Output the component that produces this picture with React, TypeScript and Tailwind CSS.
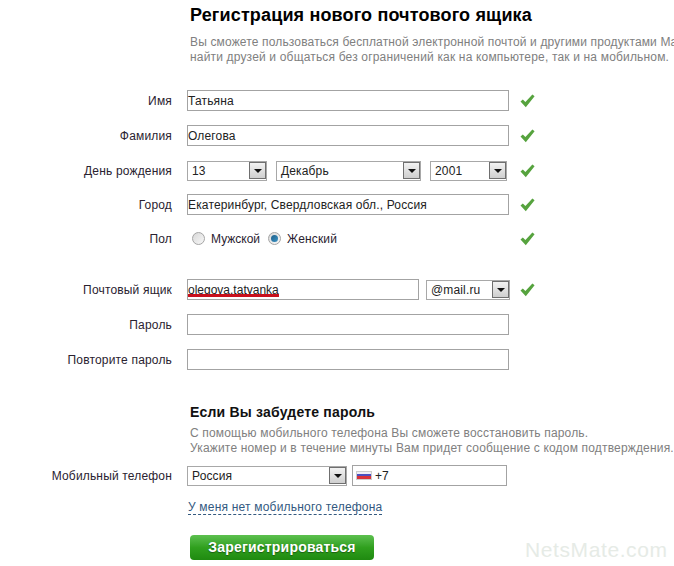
const font = 'font-["Liberation_Sans",Arial,sans-serif]'

function Check() {
    return (
        <svg width="15" height="14" viewBox="0 0 15 14" className="shrink-0">
            <path d="M0.5 7.6 L2.8 5.4 L5.4 8 L12.4 0.6 L14.6 2.2 L5.8 13.2 Z" fill="#56a33e" />
        </svg>
    )
}

function Arrow() {
    return (
        <div className="w-[17px] h-[17px] shrink-0 border border-[#6f6f6f] bg-gradient-to-b from-[#f2f2f2] to-[#cfcfcf] flex items-center justify-center">
            <div className="w-0 h-0 border-x-[4px] border-x-transparent border-t-[4px] border-t-[#111]" />
        </div>
    )
}

function Select({ value, className }: { value: string; className: string }) {
    return (
        <div className={`h-[20px] border border-[#a8a8a8] flex items-center justify-between pl-[4px] pr-[0px] text-[12px] tracking-[0.15px] text-[#222] ${className}`}>
            <span>{value}</span>
            <Arrow />
        </div>
    )
}

function Input({ value, className = 'w-[322px] tracking-[0.15px]' }: { value?: string; className?: string }) {
    return (
        <div className={`h-[21px] border border-[#a3a3a3] flex items-center pl-[0px] text-[12px] text-[#222] ${className}`}>
            {value}
        </div>
    )
}

function Row({ label, check, className = '', children }: { label: string; check?: boolean; className?: string; children: React.ReactNode }) {
    return (
        <div className={`flex items-center h-[21px] ${className}`}>
            <div className="w-[172px] text-right text-[12px] tracking-[0.17px] text-[#2a2230] shrink-0">{label}</div>
            <div className="ml-[15px] w-[322px] shrink-0 flex items-center justify-between">{children}</div>
            {check && <div className="ml-[11px]"><Check /></div>}
        </div>
    )
}

function Radio({ on }: { on?: boolean }) {
    return (
        <div className="w-[13px] h-[13px] rounded-full border border-[#a5a5a5] bg-gradient-to-br from-[#d8d8d8] to-[#f8f8f8] flex items-center justify-center shrink-0">
            {on && <div className="w-[7px] h-[7px] rounded-full bg-gradient-to-br from-[#1d5f8a] to-[#3c93c4]" />}
        </div>
    )
}

export default function App() {
    return (
        <div className={`relative w-[674px] h-[566px] overflow-hidden bg-white ${font}`}>
            <div className="pl-[190px] pt-[4px] whitespace-nowrap">
                <h1 className="text-[18px] leading-[22px] font-bold text-black tracking-[0.15px]">Регистрация нового почтового ящика</h1>
                <p className="mt-[9px] text-[12px] leading-[15px] tracking-[0.15px] text-[#808080]">
                    Вы сможете пользоваться бесплатной электронной почтой и другими продуктами Ma
                    <br />
                    <span className="tracking-[0.17px]">найти друзей и общаться без ограничений как на компьютере, так и на мобильном.</span>
                </p>
            </div>

            <div className="mt-[25px] flex flex-col">
                <Row label="Имя" check><Input value="Татьяна" /></Row>
                <Row label="Фамилия" check className="mt-[14px]"><Input value="Олегова" /></Row>
                <Row label="День рождения" check className="mt-[14px]">
                    <Select value="13" className="w-[80px]" />
                    <Select value="Декабрь" className="w-[145px]" />
                    <Select value="2001" className="w-[77px] mr-[2px]" />
                </Row>
                <Row label="Город" check className="mt-[13px]"><Input value="Екатеринбург, Свердловская обл., Россия" /></Row>
                <Row label="Пол" check className="mt-[13px]">
                    <div className="flex items-center text-[12px] text-[#2a2230] pl-[5px]">
                        <Radio />
                        <span className="ml-[6px]">Мужской</span>
                        <div className="ml-[8px]"><Radio on /></div>
                        <span className="ml-[6px] tracking-[0.15px]">Женский</span>
                    </div>
                </Row>
                <Row label="Почтовый ящик" check className="mt-[30px]">
                    <div className="relative">
                        <Input value="olegova.tatyanka" className="w-[232px]" />
                        <div className="absolute left-[1px] top-[15px] w-[91px] h-[3px] bg-[#c8101c]" />
                    </div>
                    <Select value="@mail.ru" className="w-[84px] mr-[-1px]" />
                </Row>
                <Row label="Пароль" className="mt-[14px]"><Input /></Row>
                <Row label="Повторите пароль" className="mt-[14px]"><Input /></Row>
            </div>

            <div className="mt-[33px] pl-[190px] whitespace-nowrap">
                <h2 className="text-[14px] leading-[18px] font-bold tracking-[0.2px] text-[#111]">Если Вы забудете пароль</h2>
                <p className="mt-[5px] text-[12px] leading-[15px] tracking-[0.17px] text-[#808080]">
                    С помощью мобильного телефона Вы сможете восстановить пароль.
                    <br />
                    Укажите номер и в течение минуты Вам придет сообщение с кодом подтверждения.
                </p>
            </div>

            <div className="mt-[9px]">
                <Row label="Мобильный телефон">
                    <Select value="Россия" className="w-[160px]" />
                    <div className="w-[155px] h-[21px] mr-[2px] border border-[#a3a3a3] flex items-center pl-[3px] text-[12px] text-[#222]">
                        <div className="w-[16px] h-[9px] flex flex-col shrink-0 border border-[#ccc]">
                            <div className="h-[2px] bg-[#eeeef6]" />
                            <div className="flex-1 bg-[#4a4fc0]" />
                            <div className="h-[3px] bg-[#d8323a]" />
                        </div>
                        <span className="ml-[3px]">+7</span>
                    </div>
                </Row>
            </div>

            <div className="mt-[14px] pl-[188px] text-[12px] leading-[15px] tracking-[0.2px] text-[#33597f]">
                <span className="border-b border-dashed border-[#33597f]">У меня нет мобильного телефона</span>
            </div>

            <div className="ml-[190px] mt-[20px] w-[184px] h-[25px] rounded-[4px] bg-gradient-to-b from-[#5cc04e] via-[#30a01e] to-[#1f8a10] flex items-center justify-center text-[14px] tracking-[0.2px] font-bold text-white [text-shadow:0_1px_1px_#1b5e12]">
                Зарегистрироваться
            </div>

            <div className="absolute left-[525px] top-[536px] text-[21px] leading-[28px] tracking-[0.6px] text-[#e6ebe6] pointer-events-none">
                NetsMate.com
            </div>
        </div>
    )
}
